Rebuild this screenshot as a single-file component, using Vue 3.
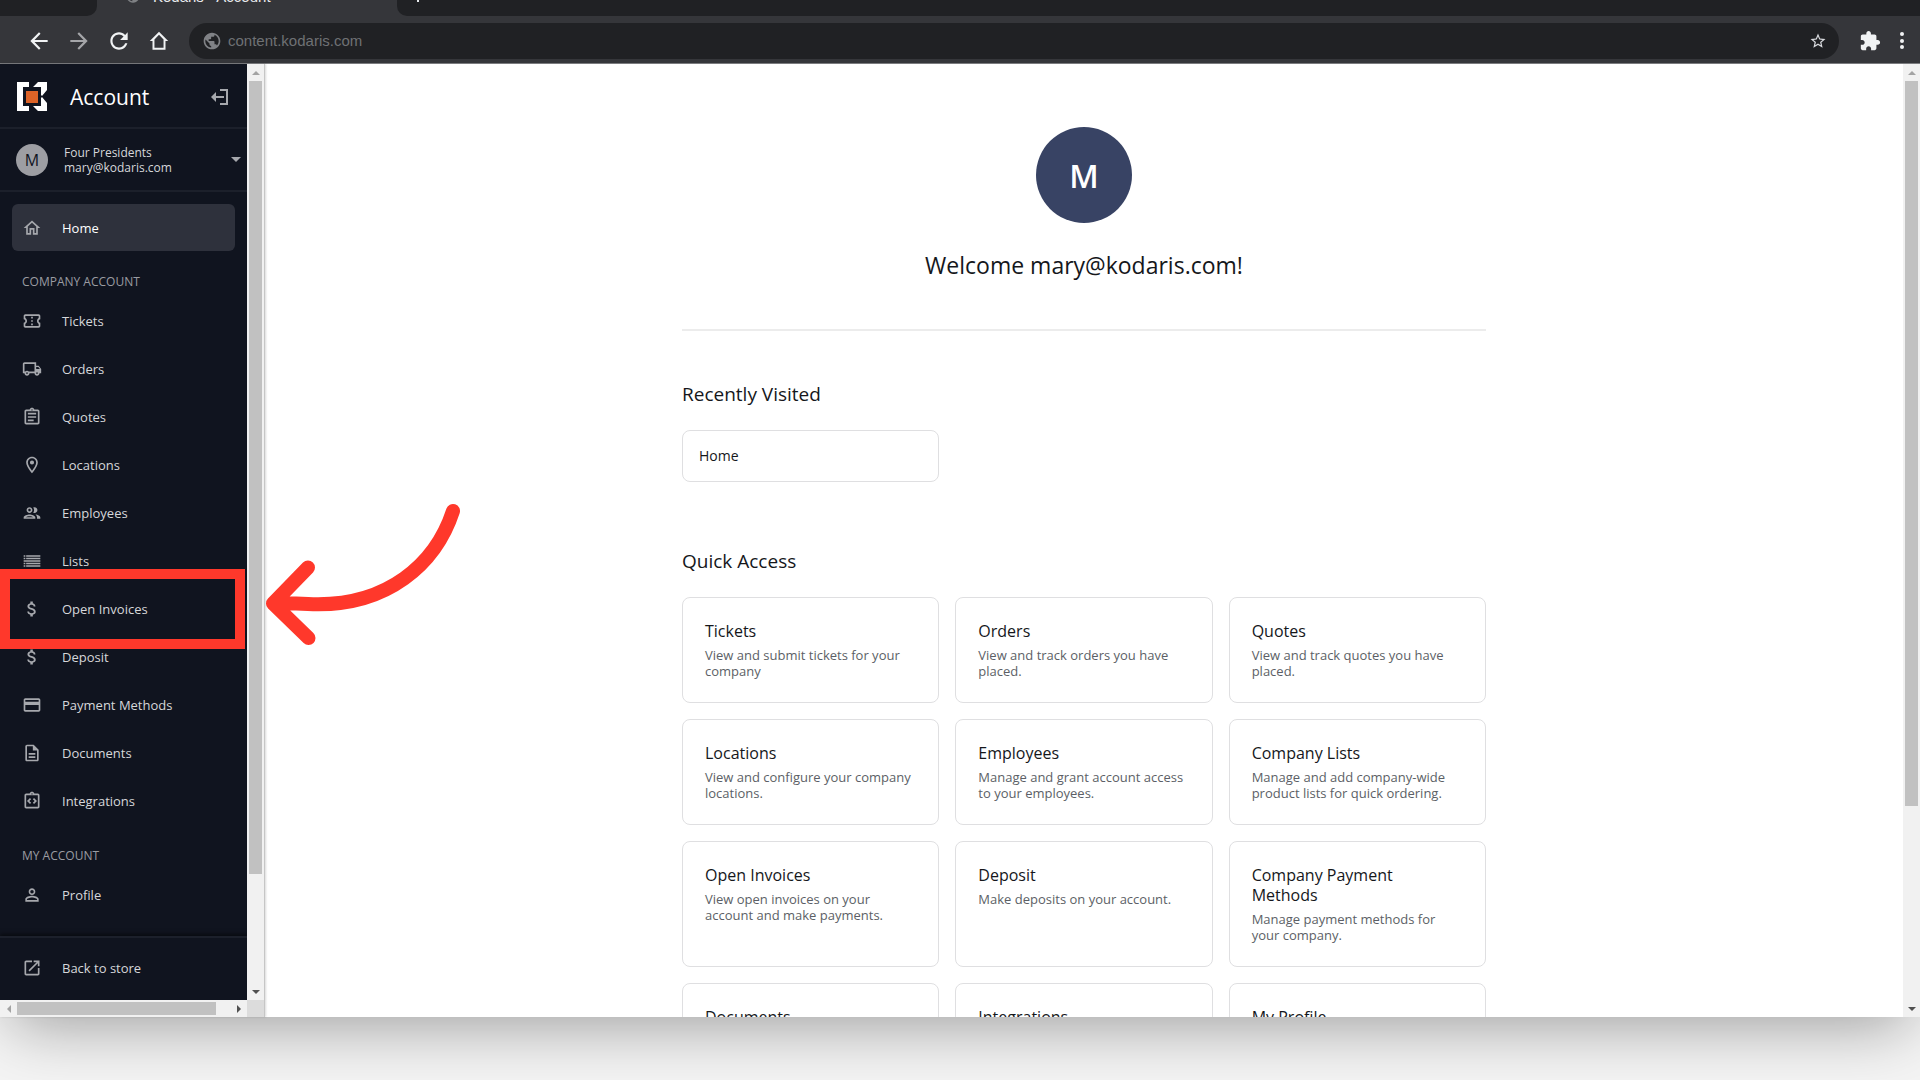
<template>
  <div class="page">
    <div class="window">
      <div class="tab-strip">
        <div class="tab tab-prev"></div>
        <div class="tab tab-active">
          <svg class="favicon" viewBox="0 0 24 24" width="16" height="16">
            <path fill="currentColor" :d="icons.globe" />
          </svg>
          <span>Kodaris - Account</span>
        </div>
        <div class="tab tab-rest">
          <button class="new-tab" aria-label="New tab">
            <svg viewBox="0 0 14 14" width="14" height="14">
              <path d="M7 1v12M1 7h12" stroke="currentColor" stroke-width="2" />
            </svg>
          </button>
        </div>
      </div>

      <div class="toolbar">
        <div class="nav-buttons">
          <button v-for="b in browserButtons" :key="b.label" :aria-label="b.label" :class="{ dim: b.dim }">
            <svg viewBox="0 0 24 24" width="26" height="26">
              <path fill="currentColor" :d="b.path" />
            </svg>
          </button>
        </div>
        <div class="address-bar">
          <svg class="globe" viewBox="0 0 24 24" width="20" height="20">
            <path fill="currentColor" :d="icons.globe" />
          </svg>
          <input v-model="url" type="text" aria-label="Address" />
          <button class="star" aria-label="Bookmark">
            <svg viewBox="0 0 24 24" width="18" height="18">
              <path fill="currentColor" :d="icons.star" />
            </svg>
          </button>
        </div>
        <button class="extensions" aria-label="Extensions">
          <svg viewBox="0 0 24 24" width="22" height="22">
            <path fill="currentColor" :d="icons.puzzle" />
          </svg>
        </button>
        <button class="menu" aria-label="Menu">
          <svg viewBox="0 0 6 20" width="6" height="20">
            <circle v-for="y in [3, 10, 16]" :key="y" cx="3" :cy="y" r="2" fill="currentColor" />
          </svg>
        </button>
      </div>

      <div class="viewport">
        <div class="side-frame">
          <aside class="sidebar">
            <header class="side-header">
              <svg class="logo" viewBox="0 0 30 30" width="30" height="30">
                <path fill="#fff" d="M0 0h12v5H6v19h6v5H0z" />
                <path fill="#fff" d="M21 0h9v8l-5 6-1-1V5h-8z" />
                <path fill="#fff" d="M25 15l5 6v8h-9l-5-5h8v-8z" />
                <path fill="#dd6327" d="M9 9h12v12H9z" />
              </svg>
              <span class="side-title">Account</span>
              <button class="logout" aria-label="Collapse">
                <svg viewBox="0 0 18 18" width="18" height="18">
                  <path fill="none" stroke="currentColor" stroke-width="2" d="M9 2h7v14H9M13 9H5" />
                  <path fill="currentColor" d="M0 9l5-5v10z" />
                </svg>
              </button>
            </header>

            <button class="user">
              <span class="user-avatar">M</span>
              <span class="user-text">
                <span>Four Presidents</span>
                <span>mary@kodaris.com</span>
              </span>
              <svg class="caret" viewBox="0 0 10 5" width="10" height="5">
                <path fill="currentColor" d="M0 0h10L5 5z" />
              </svg>
            </button>

            <nav class="side-nav">
              <a class="nav-item active" href="#home">
                <svg viewBox="0 0 24 24" width="20" height="20">
                  <path fill="currentColor" :d="icons.home" />
                </svg>
                <span>Home</span>
              </a>
              <template v-for="group in groups" :key="group.title">
                <h2 class="group-title">{{ group.title }}</h2>
                <a
                  v-for="item in group.items"
                  :key="item.label"
                  class="nav-item"
                  :class="{ highlighted: item.highlighted }"
                  href="#"
                >
                  <svg viewBox="0 0 24 24" width="20" height="20">
                    <path fill="currentColor" :d="icons[item.icon]" />
                  </svg>
                  <span>{{ item.label }}</span>
                </a>
              </template>
            </nav>

            <footer class="side-footer">
              <a class="nav-item" href="#">
                <svg viewBox="0 0 24 24" width="20" height="20">
                  <path fill="currentColor" :d="icons.open" />
                </svg>
                <span>Back to store</span>
              </a>
            </footer>
          </aside>

          <div class="scrollbar vertical">
            <i class="arrow up"></i>
            <i class="thumb side-thumb"></i>
            <i class="track side-track"></i>
            <i class="arrow down"></i>
          </div>
          <div class="scrollbar horizontal">
            <i class="arrow left"></i>
            <i class="thumb bottom-thumb"></i>
            <i class="track bottom-track"></i>
            <i class="arrow right"></i>
          </div>
          <div class="corner"></div>
        </div>

        <main class="main">
          <div class="content">
            <div class="avatar">M</div>
            <h1>Welcome mary@kodaris.com!</h1>
            <hr />
            <section class="section">
              <h2>Recently Visited</h2>
              <div class="cards">
                <a class="card recent" href="#home">Home</a>
              </div>
            </section>
            <section class="section quick">
              <h2>Quick Access</h2>
              <div class="cards">
                <a v-for="card in cards" :key="card.title" class="card" href="#">
                  <h3>{{ card.title }}</h3>
                  <p v-if="card.text">{{ card.text }}</p>
                </a>
              </div>
            </section>
          </div>
        </main>

        <div class="scrollbar vertical">
          <i class="arrow up"></i>
          <i class="thumb main-thumb"></i>
          <i class="track main-track"></i>
          <i class="arrow down"></i>
        </div>

        <!-- hand-drawn pointer towards the highlighted item -->
        <svg class="pointer" viewBox="0 0 200 150" width="200" height="150">
          <path
            d="M187 11C170 63 122 108 42 104Q24 103 7 103.500M42 67.500L7 103.500L42.500 138"
            fill="none"
            stroke="#ff382b"
            stroke-width="14"
            stroke-linecap="round"
            stroke-linejoin="round"
          />
        </svg>
      </div>
    </div>
  </div>
</template>

<script setup>
import { ref } from 'vue'

const url = ref('content.kodaris.com')

const clipboard = 'M19 3h-4.180C14.400 1.840 13.300 1 12 1s-2.400.840-2.820 2H5c-1.100 0-2 .900-2 2v14c0 1.100.900 2 2 2h14c1.100 0 2-.900 2-2V5c0-1.100-.900-2-2-2zm-7-.250c.410 0 .750.340.750.750s-.340.750-.750.750-.750-.340-.750-.750.340-.750.750-.750zM19 19H5V5h14v14z'

const icons = {
  globe: 'M12 2C6.48 2 2 6.48 2 12s4.48 10 10 10 10-4.48 10-10S17.52 2 12 2zm-1 17.93c-3.95-.49-7-3.85-7-7.93 0-.62.08-1.21.21-1.79L9 15v1c0 1.1.9 2 2 2v1.93zm6.9-2.54c-.26-.81-1-1.39-1.9-1.39h-1v-3c0-.55-.45-1-1-1H8v-2h2c.55 0 1-.45 1-1V7h2c1.1 0 2-.9 2-2v-.41c2.93 1.19 5 4.06 5 7.41 0 2.08-.8 3.97-2.1 5.39z',
  star: 'M22 9.24l-7.19-.62L12 2 9.190 8.630 2 9.240l5.460 4.730L5.820 21 12 17.270 18.180 21l-1.630-7.030L22 9.240zM12 15.400l-3.760 2.270 1-4.280-3.320-2.880 4.380-.380L12 6.100l1.710 4.040 4.380.380-3.320 2.880 1 4.280L12 15.400z',
  puzzle: 'M20.5 11H19V7c0-1.1-.9-2-2-2h-4V3.500C13 2.120 11.880 1 10.500 1S8 2.120 8 3.500V5H4c-1.100 0-1.990.900-1.990 2v3.800H3.500c1.490 0 2.700 1.210 2.700 2.700s-1.210 2.700-2.700 2.700H2V20c0 1.100.900 2 2 2h3.800v-1.500c0-1.490 1.210-2.700 2.700-2.700s2.700 1.210 2.700 2.700V22H17c1.100 0 2-.900 2-2v-4h1.500c1.380 0 2.500-1.120 2.500-2.500S21.880 11 20.500 11z',
  home: 'M12 5.690l5 4.500V18h-2v-6H9v6H7v-7.810l5-4.500M12 3L2 12h3v8h6v-6h2v6h6v-8h3L12 3z',
  ticket: 'M22 10V6c0-1.110-.9-2-2-2H4c-1.1 0-1.990.890-1.990 2v4c1.100 0 1.990.900 1.990 2s-.890 2-2 2v4c0 1.100.900 2 2 2h16c1.100 0 2-.900 2-2v-4c-1.100 0-2-.900-2-2s.900-2 2-2zm-2-1.460c-1.190.690-2 1.990-2 3.460s.810 2.770 2 3.460V18H4v-2.540c1.190-.690 2-1.990 2-3.460 0-1.480-.800-2.770-1.990-3.460L4 6h16v2.540zM11 15h2v2h-2zm0-4h2v2h-2zm0-4h2v2h-2z',
  truck: 'M20 8h-3V4H3c-1.1 0-2 .9-2 2v11h2c0 1.66 1.34 3 3 3s3-1.34 3-3h6c0 1.66 1.34 3 3 3s3-1.34 3-3h2v-5l-3-4zm-.5 1.5l1.960 2.500H17V9.500h2.500zM6 18c-.550 0-1-.450-1-1s.450-1 1-1 1 .450 1 1-.450 1-1 1zm2.220-3c-.550-.610-1.330-1-2.220-1s-1.670.390-2.220 1H3V6h12v9H8.220zM18 18c-.550 0-1-.450-1-1s.450-1 1-1 1 .450 1 1-.450 1-1 1z',
  quote: `M7 15h7v2H7zm0-4h10v2H7zm0-4h10v2H7z${clipboard}`,
  pin: 'M12 2C8.130 2 5 5.130 5 9c0 5.250 7 13 7 13s7-7.750 7-13c0-3.870-3.130-7-7-7zM7 9c0-2.760 2.240-5 5-5s5 2.240 5 5c0 2.880-2.880 7.190-5 9.880C9.920 16.210 7 11.850 7 9zM12 6.500a2.500 2.500 0 1 0 0 5a2.500 2.500 0 1 0 0-5z',
  people: 'M9 13.750c-2.340 0-7 1.170-7 3.500V19h14v-1.750c0-2.330-4.660-3.500-7-3.500zM4.340 17c.840-.580 2.870-1.250 4.660-1.250s3.820.670 4.660 1.250H4.340zM9 12c1.930 0 3.500-1.570 3.500-3.500S10.930 5 9 5 5.500 6.570 5.500 8.500 7.070 12 9 12zm0-5c.830 0 1.500.670 1.500 1.500S9.830 10 9 10s-1.500-.670-1.500-1.500S8.170 7 9 7zm7.040 6.810c1.160.840 1.960 1.960 1.960 3.440V19h4v-1.750c0-2.020-3.500-3.170-5.960-3.440zM15 12c1.930 0 3.500-1.570 3.500-3.500S16.930 5 15 5c-.540 0-1.040.130-1.500.350.630.890 1 1.980 1 3.150s-.370 2.260-1 3.150c.460.220.960.350 1.500.350z',
  list: 'M2 5h2v2H2zm3 0h17v2H5zM2 8h2v2H2zm3 0h17v2H5zM2 11h20v2H2zM2 14h2v2H2zm3 0h17v2H5zM2 17h2v2H2zm3 0h17v2H5z',
  dollar: 'M11.800 10.900c-2.270-.590-3-1.200-3-2.150 0-1.090 1.010-1.850 2.700-1.850 1.780 0 2.440.850 2.500 2.100h2.210c-.070-1.720-1.120-3.300-3.210-3.810V3h-3v2.160c-1.940.420-3.500 1.680-3.500 3.610 0 2.310 1.910 3.460 4.700 4.130 2.500.600 3 1.480 3 2.410 0 .690-.490 1.790-2.700 1.790-2.060 0-2.870-.920-2.980-2.100h-2.200c.120 2.190 1.760 3.420 3.680 3.830V21h3v-2.150c1.950-.370 3.500-1.500 3.500-3.550 0-2.840-2.430-3.810-4.700-4.400z',
  card: 'M20 4H4c-1.110 0-1.990.890-1.990 2L2 18c0 1.110.890 2 2 2h16c1.110 0 2-.890 2-2V6c0-1.110-.890-2-2-2zm0 14H4v-6h16v6zm0-10H4V6h16v2z',
  document: 'M8 16h8v2H8zm0-4h8v2H8zm6-10H6c-1.100 0-2 .900-2 2v16c0 1.100.890 2 1.990 2H18c1.100 0 2-.900 2-2V8l-6-6zm4 18H6V4h7v5h5v11z',
  code: `M11 14.170L8.830 12 11 9.830 9.590 8.410 6 12l3.590 3.590zM14.410 15.590L18 12l-3.590-3.590L13 9.830 15.170 12 13 14.170z${clipboard}`,
  person: 'M12 5.900a2.100 2.100 0 1 1 0 4.200a2.100 2.100 0 0 1 0-4.200m0 9c2.970 0 6.100 1.460 6.100 2.100v1.100H5.900V17c0-.640 3.130-2.100 6.100-2.100M12 4C9.790 4 8 5.790 8 8s1.790 4 4 4 4-1.790 4-4-1.790-4-4-4zm0 9c-2.670 0-8 1.340-8 4v3h16v-3c0-2.660-5.330-4-8-4z',
  open: 'M19 19H5V5h7V3H5c-1.110 0-2 .900-2 2v14c0 1.100.890 2 2 2h14c1.100 0 2-.900 2-2v-7h-2v7zM14 3v2h3.590l-9.830 9.830 1.410 1.410L19 6.410V10h2V3h-7z'
}

const browserButtons = [
  { label: 'Back', path: 'M20 11H7.830l5.590-5.590L12 4l-8 8 8 8 1.410-1.410L7.830 13H20v-2z' },
  { label: 'Forward', dim: true, path: 'M12 4l-1.410 1.410L16.170 11H4v2h12.170l-5.580 5.590L12 20l8-8z' },
  { label: 'Reload', path: 'M17.650 6.350C16.200 4.900 14.210 4 12 4c-4.420 0-7.990 3.580-7.990 8s3.570 8 7.990 8c3.730 0 6.840-2.550 7.730-6h-2.080c-.820 2.330-3.040 4-5.650 4-3.310 0-6-2.690-6-6s2.690-6 6-6c1.660 0 3.140.690 4.220 1.780L13 11h7V4l-2.350 2.350z' },
  { label: 'Home page', path: 'M12 3.500L3.500 12H6v8h12v-8h2.500L12 3.500zM12 6.300l4.200 4.200V18.200H7.800V10.500z' }
]

const groups = [
  {
    title: 'COMPANY ACCOUNT',
    items: [
      { label: 'Tickets', icon: 'ticket' },
      { label: 'Orders', icon: 'truck' },
      { label: 'Quotes', icon: 'quote' },
      { label: 'Locations', icon: 'pin' },
      { label: 'Employees', icon: 'people' },
      { label: 'Lists', icon: 'list' },
      { label: 'Open Invoices', icon: 'dollar', highlighted: true },
      { label: 'Deposit', icon: 'dollar' },
      { label: 'Payment Methods', icon: 'card' },
      { label: 'Documents', icon: 'document' },
      { label: 'Integrations', icon: 'code' }
    ]
  },
  {
    title: 'MY ACCOUNT',
    items: [{ label: 'Profile', icon: 'person' }]
  }
]

const cards = [
  { title: 'Tickets', text: 'View and submit tickets for your company' },
  { title: 'Orders', text: 'View and track orders you have placed.' },
  { title: 'Quotes', text: 'View and track quotes you have placed.' },
  { title: 'Locations', text: 'View and configure your company locations.' },
  { title: 'Employees', text: 'Manage and grant account access to your employees.' },
  { title: 'Company Lists', text: 'Manage and add company-wide product lists for quick ordering.' },
  { title: 'Open Invoices', text: 'View open invoices on your account and make payments.' },
  { title: 'Deposit', text: 'Make deposits on your account.' },
  { title: 'Company Payment Methods', text: 'Manage payment methods for your company.' },
  { title: 'Documents' },
  { title: 'Integrations' },
  { title: 'My Profile' }
]
</script>

<style>
body {
  margin: 0;
  background: #f4f4f4;
}
</style>

<style scoped>
* {
  box-sizing: border-box;
}

.page {
  height: 100vh;
  overflow: hidden;
  font-family: 'Open Sans', 'Noto Sans', sans-serif;
  background: #f4f4f4;
}

button {
  padding: 0;
  border: none;
  background: none;
  color: inherit;
  font: inherit;
  cursor: pointer;
}

a {
  color: inherit;
  text-decoration: none;
}

svg {
  display: block;
  flex: none;
}

h1,
h2,
h3,
p {
  margin: 0;
  font-weight: 400;
}

/* the tab strip is partly scrolled off the top edge */
.window {
  display: flex;
  flex-direction: column;
  height: calc(100vh - 39px);
  margin-top: -24px;
  box-shadow: 0 20px 60px -12px rgba(0, 0, 0, 0.36);
}

.tab-strip {
  display: flex;
  flex: none;
  height: 40px;
  background: #35363a;
  font-family: 'Liberation Sans', sans-serif;
  font-size: 15px;
  color: #e8eaed;
}

.tab {
  display: flex;
  align-items: center;
}

.tab-prev {
  width: 97px;
  background: #202124;
  border-bottom-right-radius: 10px;
}

.tab-active {
  gap: 12px;
  width: 300px;
  padding: 0 28px;
}

.favicon {
  color: #7f8184;
}

.tab-rest {
  flex: 1;
  padding-left: 14px;
  background: #202124;
  border-bottom-left-radius: 10px;
}

.toolbar {
  display: flex;
  align-items: center;
  flex: none;
  height: 48px;
  padding: 2px 15px 0 26px;
  background: #35363a;
  border-bottom: 1px solid #7b7c7f;
  color: #f1f3f4;
}

.nav-buttons {
  display: flex;
  gap: 14px;
  margin-right: 17px;
}

.dim {
  color: #a5a6a9;
}

.address-bar {
  display: flex;
  align-items: center;
  flex: 1;
  gap: 6px;
  height: 36px;
  padding: 0 12px 0 13px;
  border-radius: 18px;
  background: #202124;
}

.globe {
  color: #808286;
}

.address-bar input {
  flex: 1;
  min-width: 0;
  padding: 0;
  border: none;
  outline: none;
  background: none;
  font-family: 'Liberation Sans', sans-serif;
  font-size: 15px;
  color: #6f7174;
}

.star {
  color: #dadce0;
}

.extensions {
  margin: 0 18px 0 20px;
}

.viewport {
  position: relative;
  display: flex;
  flex: 1;
  min-height: 0;
  background: #fff;
}

.side-frame {
  display: grid;
  grid-template-columns: 247px 17px;
  grid-template-rows: minmax(0, 1fr) 17px;
  flex: none;
  border-right: 1px solid #c6c6c6;
  box-shadow: 1px 0 2px rgba(0, 0, 0, 0.15);
}

.sidebar {
  display: flex;
  flex-direction: column;
  min-height: 0;
  background: #10141f;
  color: #d6d7da;
  font-size: 13px;
}

.side-header {
  display: flex;
  align-items: center;
  flex: none;
  height: 65px;
  padding: 2px 18px 0 17px;
  border-bottom: 2px solid #1c202b;
}

.side-title {
  flex: 1;
  padding-left: 23px;
  font-size: 21px;
  color: #fff;
}

.logout {
  color: #a6a8ad;
}

.user {
  display: flex;
  align-items: center;
  flex: none;
  height: 63px;
  padding: 0 6px 0 16px;
  border-bottom: 2px solid #1c202b;
  text-align: left;
}

.user-avatar {
  display: flex;
  align-items: center;
  justify-content: center;
  width: 32px;
  height: 32px;
  border-radius: 50%;
  background: #9d9ea3;
  color: #10141f;
  font-size: 16px;
}

.user-text {
  display: flex;
  flex-direction: column;
  flex: 1;
  padding-left: 16px;
  font-size: 12px;
  line-height: 15px;
}

.caret {
  color: #a6a8ad;
}

.side-nav {
  flex: 1;
  min-height: 0;
  overflow: hidden;
  padding: 12px 12px 0;
}

.nav-item {
  position: relative;
  display: flex;
  align-items: center;
  gap: 20px;
  height: 48px;
  padding-left: 10px;
  border-radius: 6px;
}

.nav-item svg {
  color: #a6a8ad;
}

.nav-item.active {
  height: 47px;
  background: #2e313c;
  color: #fff;
}

.nav-item.highlighted::after {
  content: '';
  position: absolute;
  inset: -16px -10px -16px -12px;
  border: 10px solid #ff382b;
  z-index: 1;
}

.group-title {
  padding: 21px 10px 5px;
  font-size: 12px;
  line-height: 20px;
  color: #9a9ca2;
}

.side-footer {
  flex: none;
  height: 64px;
  padding: 6px 12px;
  border-top: 2px solid #1c202b;
  box-shadow: 0 -2px 4px rgba(0, 0, 0, 0.5);
}

.scrollbar {
  display: flex;
  flex: none;
  background: #f1f1f1;
}

.vertical {
  flex-direction: column;
  width: 17px;
  padding: 0 2px;
}

.horizontal {
  height: 17px;
  padding: 2px 0;
}

.corner {
  background: #dcdcdc;
}

.thumb {
  background: #c1c1c1;
}

.side-thumb {
  flex: 793;
}

.side-track {
  flex: 109;
}

.bottom-thumb {
  flex: 199;
}

.bottom-track {
  flex: 14;
}

.main-thumb {
  flex: 724;
}

.main-track {
  flex: 194;
}

.arrow {
  display: flex;
  align-items: center;
  justify-content: center;
  flex: none;
  color: #505050;
}

.vertical .arrow {
  height: 17px;
}

.horizontal .arrow {
  width: 17px;
}

.arrow::after {
  content: '';
  border: 4px solid transparent;
}

.arrow.up,
.arrow.left {
  color: #a3a3a3;
}

.arrow.up::after {
  border-top: none;
  border-bottom-color: currentColor;
}

.arrow.down::after {
  border-bottom: none;
  border-top-color: currentColor;
}

.arrow.left::after {
  border-left: none;
  border-right-color: currentColor;
}

.arrow.right::after {
  border-right: none;
  border-left-color: currentColor;
}

.main {
  flex: 1;
  min-width: 0;
  overflow: hidden;
  color: #15171b;
}

.content {
  max-width: 804px;
  margin: 0 auto;
  padding-top: 63px;
}

.avatar {
  display: flex;
  align-items: center;
  justify-content: center;
  width: 96px;
  height: 96px;
  margin: 0 auto;
  border-radius: 50%;
  background: #384364;
  color: #fff;
  font-size: 32px;
  font-weight: 600;
}

h1 {
  margin-top: 26px;
  font-size: 23px;
  line-height: 32px;
  text-align: center;
}

hr {
  height: 2px;
  margin: 48px 0 0;
  border: none;
  background: #ececec;
}

.section {
  margin-top: 51px;
}

.section.quick {
  margin-top: 67px;
}

.section h2 {
  margin-bottom: 24px;
  font-size: 19px;
  line-height: 24px;
}

.cards {
  display: grid;
  grid-template-columns: repeat(3, minmax(0, 1fr));
  gap: 16px;
}

.card {
  min-height: 106px;
  padding: 23px 22px;
  border: 1px solid #dfdfe1;
  border-radius: 8px;
}

.card.recent {
  min-height: 0;
  padding: 15px 16px;
  font-size: 14px;
  line-height: 20px;
}

.card h3 {
  padding-right: 16px;
  font-size: 16px;
  line-height: 20px;
}

.card p {
  margin-top: 6px;
  font-size: 13px;
  line-height: 16px;
  color: #5c5f66;
}

.pointer {
  position: absolute;
  top: 436px;
  left: 266px;
  z-index: 2;
  pointer-events: none;
}
</style>
